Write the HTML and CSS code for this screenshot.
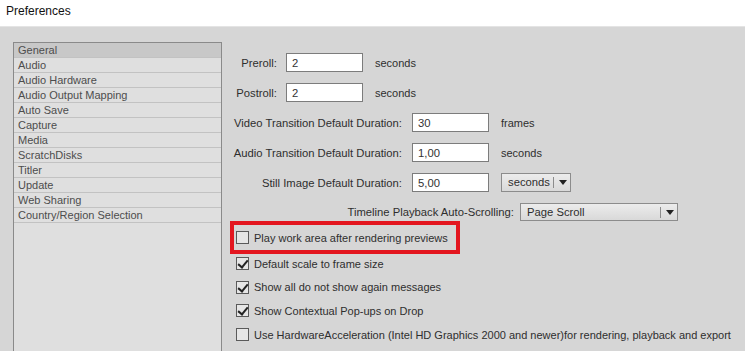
FILE: index.html
```html
<!DOCTYPE html>
<html lang="en">
<head>
  <meta charset="UTF-8">
  <title>Preferences</title>
  <link rel="stylesheet" href="styles.css">
</head>
<body>
  <div class="titlebar">Preferences</div>
  <div class="dialog">
    <!-- список разделов -->
    <ul class="sections">
      <li class="selected">General</li>
      <li>Audio</li>
      <li>Audio Hardware</li>
      <li>Audio Output Mapping</li>
      <li>Auto Save</li>
      <li>Capture</li>
      <li>Media</li>
      <li>ScratchDisks</li>
      <li>Titler</li>
      <li>Update</li>
      <li>Web Sharing</li>
      <li>Country/Region Selection</li>
    </ul>
    <div class="panel">
      <div class="fields">
        <div class="row">
          <span class="label short">Preroll:</span>
          <input type="text" value="2">
          <span class="unit">seconds</span>
        </div>
        <div class="row">
          <span class="label short">Postroll:</span>
          <input type="text" value="2">
          <span class="unit">seconds</span>
        </div>
        <div class="row">
          <span class="label long">Video Transition Default Duration:</span>
          <input type="text" value="30">
          <span class="unit">frames</span>
        </div>
        <div class="row">
          <span class="label long">Audio Transition Default Duration:</span>
          <input type="text" value="1,00">
          <span class="unit">seconds</span>
        </div>
        <div class="row">
          <span class="label long">Still Image Default Duration:</span>
          <input type="text" value="5,00">
          <div class="select small"><span class="value">seconds</span><span class="arrow"></span></div>
        </div>
      </div>
      <div class="row timeline">
        <span class="label wide">Timeline Playback Auto-Scrolling:</span>
        <div class="select big"><span class="value">Page Scroll</span><span class="arrow"></span></div>
      </div>
      <div class="highlight">
        <label class="check"><span class="box"></span>Play work area after rendering previews</label>
      </div>
      <label class="check"><span class="box checked"></span>Default scale to frame size</label>
      <label class="check"><span class="box checked"></span>Show all do not show again messages</label>
      <label class="check"><span class="box checked"></span>Show Contextual Pop-ups on Drop</label>
      <label class="check"><span class="box"></span>Use HardwareAcceleration (Intel HD Graphics 2000 and newer)for rendering, playback and export</label>
    </div>
  </div>
</body>
</html>
```

FILE: styles.css
```css
html, body {
  margin: 0;
  height: 351px;
  overflow: hidden;
}
body {
  font-family: "Liberation Sans", Arial, sans-serif;
  font-size: 11px;
  color: #2e2e2e;
  background: #d6d6d6;
}
.titlebar {
  height: 26px;
  line-height: 22px;
  padding-left: 6px;
  background: #fff;
  font-size: 12px;
  color: #111;
  border-bottom: 1px solid #e4e4e4;
}
.dialog {
  display: flex;
}
.sections {
  list-style: none;
  margin: 15px 0 0 13px;
  padding: 0;
  width: 207px;
  height: 330px;
  background: #dfdfdf;
  border: 1px solid #8a8a8a;
  flex-shrink: 0;
}
.sections li {
  height: 14px;
  line-height: 14px;
  padding-left: 4px;
  border-bottom: 1px solid #c2c2c2;
  color: #4d4d4d;
}
.sections li.selected {
  background: #c8c8c8;
}
.panel {
  margin-left: 8px;
  padding-top: 26px;
  flex: 1;
}
.fields {
  display: flex;
  flex-direction: column;
  gap: 11px;
}
.row {
  display: flex;
  align-items: center;
  height: 19px;
}
.label {
  text-align: right;
  margin-right: 6px;
  flex-shrink: 0;
  font-size: 11.25px;
}
.label.short { width: 47px; margin-right: 9px; }
.label.long { width: 172px; margin-right: 10px; }
.label.wide { width: 284px; }
.row input {
  height: 17px;
  box-sizing: content-box;
  margin: 0;
  padding: 0 5px;
  border: 1px solid #7c7c7c;
  font: inherit;
  font-size: 11.25px;
  color: #333;
  background: #fff;
  width: 65px;
}
.unit {
  margin-left: 12px;
}
.select {
  display: flex;
  align-items: center;
  height: 17px;
  border: 1px solid #8c8c8c;
  background: linear-gradient(#ececec, #d9d9d9);
  box-sizing: border-box;
}
.select .value {
  flex: 1;
  padding-left: 6px;
  border-right: 1px solid #8c8c8c;
  line-height: 11px;
  font-size: 11.25px;
}
.select .arrow {
  width: 16px;
  height: 100%;
  position: relative;
}
.select .arrow::after {
  content: "";
  position: absolute;
  left: 5px;
  top: 6px;
  border-left: 4px solid transparent;
  border-right: 4px solid transparent;
  border-top: 5px solid #222;
}
.select.small {
  margin-left: 12px;
  width: 70px;
  height: 19px;
}
.select.big {
  width: 158px;
  height: 18px;
}
.timeline {
  margin-top: 11px;
  height: 18px;
}
.highlight {
  width: 220px;
  height: 25px;
  border: 4px solid #e3161f;
  padding-left: 2px;
  margin-bottom: -2px;
  display: flex;
  align-items: center;
}
.check {
  display: flex;
  align-items: center;
  height: 23.6px;
  padding-left: 6px;
  white-space: nowrap;
}
.highlight .check {
  padding-left: 0;
}
.box {
  width: 11px;
  height: 11px;
  border: 1px solid #5a5a5a;
  background: #e6e6e6;
  margin-right: 5px;
  position: relative;
  flex-shrink: 0;
}
.box.checked::after {
  content: "";
  position: absolute;
  left: 3px;
  top: 0;
  width: 4px;
  height: 8px;
  border-right: 2px solid #222;
  border-bottom: 2px solid #222;
  transform: rotate(40deg);
}
```
